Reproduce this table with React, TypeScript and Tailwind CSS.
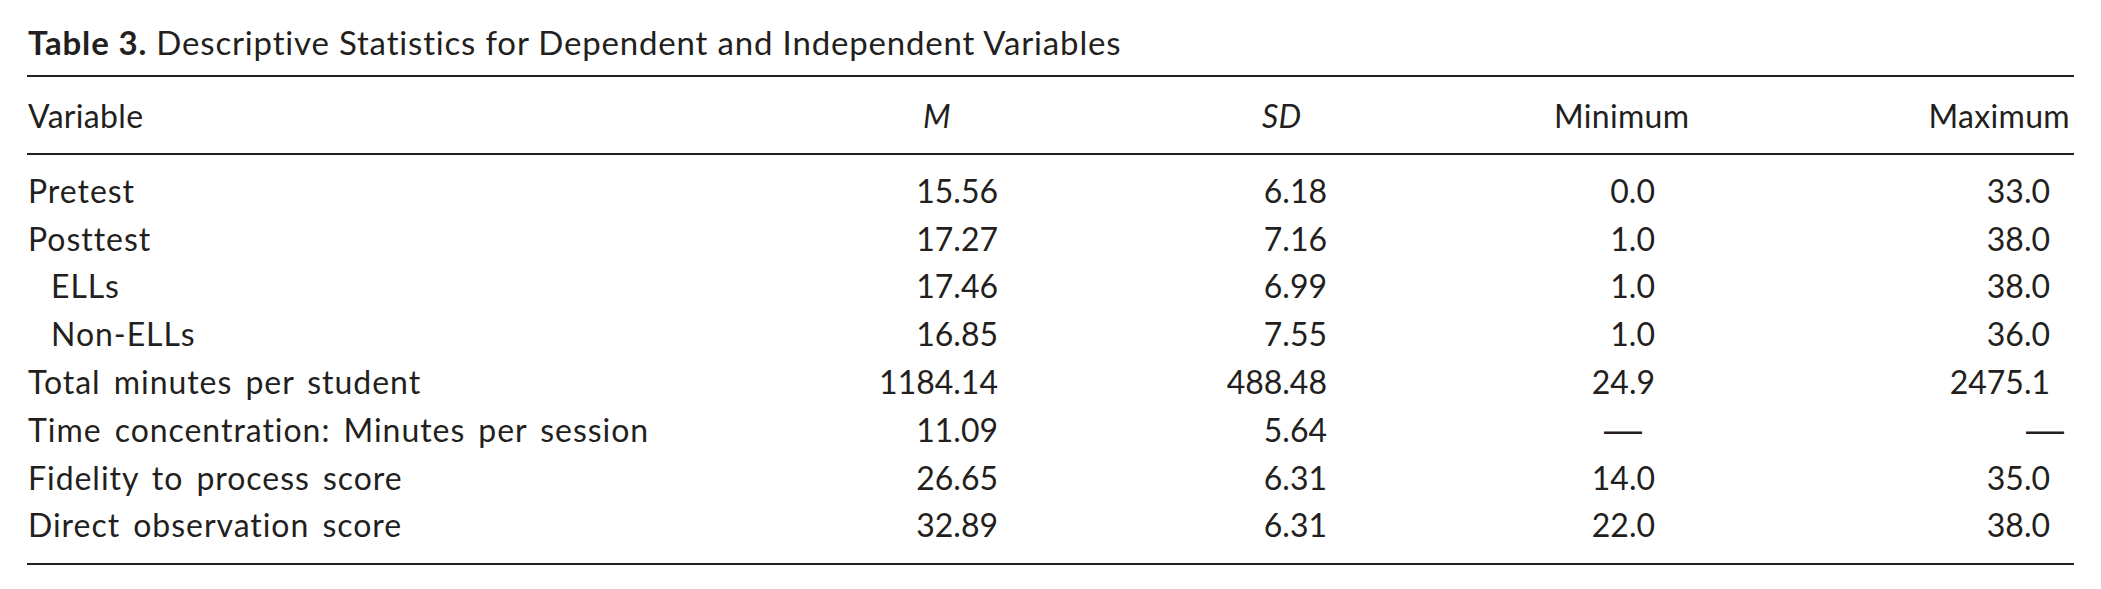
const rows: { label: string; indent?: boolean; m: string; sd: string; min: string; max: string }[] = [
  { label: 'Pretest', m: '15.56', sd: '6.18', min: '0.0', max: '33.0' },
  { label: 'Posttest', m: '17.27', sd: '7.16', min: '1.0', max: '38.0' },
  { label: 'ELLs', indent: true, m: '17.46', sd: '6.99', min: '1.0', max: '38.0' },
  { label: 'Non-ELLs', indent: true, m: '16.85', sd: '7.55', min: '1.0', max: '36.0' },
  { label: 'Total minutes per student', m: '1184.14', sd: '488.48', min: '24.9', max: '2475.1' },
  { label: 'Time concentration: Minutes per session', m: '11.09', sd: '5.64', min: '—', max: '—' },
  { label: 'Fidelity to process score', m: '26.65', sd: '6.31', min: '14.0', max: '35.0' },
  { label: 'Direct observation score', m: '32.89', sd: '6.31', min: '22.0', max: '38.0' },
];

const cols = 'grid grid-cols-[833px_220px_320px_360px_314px]';

function Cell({ value, pr, dashPr }: { value: string; pr: string; dashPr: string }) {
  if (value === '—') {
    return (
      <div className={`text-right leading-none ${dashPr}`}>
        <span className="font-['Liberation_Sans',sans-serif] text-[38px] leading-none font-light">—</span>
      </div>
    );
  }
  return <div className={`text-right ${pr}`}>{value}</div>;
}

export default function App() {
  return (
    <div className="w-[2101px] h-[589px] bg-white text-[#231f20] font-['Lato',sans-serif] pl-[27px] pt-[22px]">
      <div className="w-[2047px]">
        <h1 className="text-[33px] leading-[40px] tracking-[0.025em] pl-[1px]">
          <span className="font-bold">Table 3.</span> Descriptive Statistics for Dependent and Independent Variables
        </h1>
        <div className="mt-[13px] h-[2px] bg-[#231f20]" />
        <div className={`${cols} h-[76px] items-center text-[32px] tracking-[0.01em] pt-[2px]`}>
          <div className="pl-[1px]">Variable</div>
          <div className="pl-[63px] italic">M</div>
          <div className="pl-[182px] italic">SD</div>
          <div className="pl-[154px]">Minimum</div>
          <div className="text-right pr-[4px]">Maximum</div>
        </div>
        <div className="h-[2px] bg-[#231f20]" />
        <div className="pt-[12px] pb-[14px] text-[32px] leading-[40px]">
          {rows.map((r) => (
            <div key={r.label} className={`${cols} h-[47.8px] items-center`}>
              <div className={`tracking-[0.03em] [word-spacing:4px] ${r.indent ? 'pl-[24px]' : 'pl-[1px]'}`}>{r.label}</div>
              <div className="text-right pr-[82px]">{r.m}</div>
              <div className="text-right pr-[73px]">{r.sd}</div>
              <Cell value={r.min} pr="pr-[105px]" dashPr="pr-[118px]" />
              <Cell value={r.max} pr="pr-[24px]" dashPr="pr-[10px]" />
            </div>
          ))}
        </div>
        <div className="h-[2px] bg-[#231f20]" />
      </div>
    </div>
  );
}
